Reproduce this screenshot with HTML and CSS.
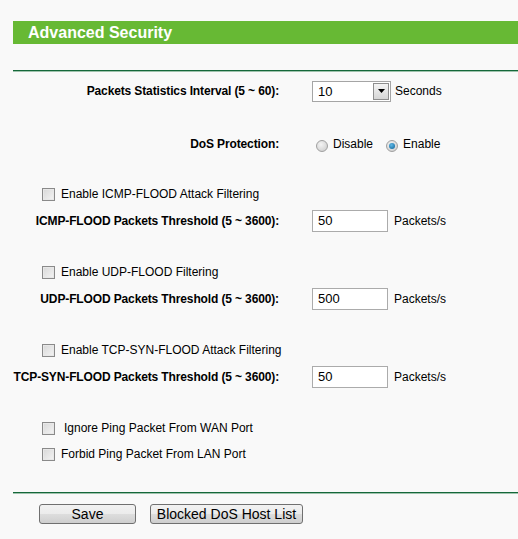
FILE: index.html
```html
<!DOCTYPE html>
<html>
<head>
<meta charset="utf-8">
<link rel="stylesheet" href="styles.css">
</head>
<body>
<div class="page">
  <div class="title">Advanced Security</div>
  <div class="rule top-rule"></div>

  <div class="row">
    <div class="label">Packets Statistics Interval (5 ~ 60):</div>
    <div class="value">
      <div class="select"><span class="sel-text">10</span><span class="sel-btn"><svg width="7" height="4" viewBox="0 0 7 4"><path d="M0 0h7L3.5 4z" fill="#000"/></svg></span></div>
      <span class="unit">Seconds</span>
    </div>
  </div>

  <div class="row gap-27">
    <div class="label">DoS Protection:</div>
    <div class="value radios">
      <span class="radio"></span><span class="rlabel">Disable</span>
      <span class="radio checked"></span><span class="rlabel">Enable</span>
    </div>
  </div>

  <div class="row check-row gap-24">
    <span class="checkbox"></span><span class="clabel">Enable ICMP-FLOOD Attack Filtering</span>
  </div>
  <div class="row gap-1">
    <div class="label">ICMP-FLOOD Packets Threshold (5 ~ 3600):</div>
    <div class="value"><div class="input">50</div><span class="unit u2">Packets/s</span></div>
  </div>

  <div class="row check-row gap-25">
    <span class="checkbox"></span><span class="clabel">Enable UDP-FLOOD Filtering</span>
  </div>
  <div class="row gap-1">
    <div class="label">UDP-FLOOD Packets Threshold (5 ~ 3600):</div>
    <div class="value"><div class="input">500</div><span class="unit u2">Packets/s</span></div>
  </div>

  <div class="row check-row gap-25">
    <span class="checkbox"></span><span class="clabel">Enable TCP-SYN-FLOOD Attack Filtering</span>
  </div>
  <div class="row gap-1">
    <div class="label">TCP-SYN-FLOOD Packets Threshold (5 ~ 3600):</div>
    <div class="value"><div class="input">50</div><span class="unit u2">Packets/s</span></div>
  </div>

  <div class="row check-row gap-25">
    <span class="checkbox"></span><span class="clabel extra">Ignore Ping Packet From WAN Port</span>
  </div>
  <div class="row check-row">
    <span class="checkbox"></span><span class="clabel">Forbid Ping Packet From LAN Port</span>
  </div>

  <div class="rule bottom-rule"></div>
  <div class="buttons">
    <button class="btn save">Save</button>
    <button class="btn blocked">Blocked DoS Host List</button>
  </div>
</div>
</body>
</html>
```

FILE: styles.css
```css
* { box-sizing: border-box; }
html, body {
  margin: 0;
  padding: 0;
  background: #f9f9f9;
}
body {
  font-family: "Liberation Sans", Arial, sans-serif;
  font-size: 12px;
  color: #000;
}
.page {
  width: 518px;
  height: 539px;
  padding-top: 21px;
  overflow: hidden;
}
.title {
  margin-left: 13px;
  height: 23px;
  background: #67b934;
  color: #fff;
  font-weight: bold;
  font-size: 16px;
  line-height: 23px;
  padding-left: 15px;
}
.rule {
  margin-left: 13px;
  height: 2px;
  border-top: 1px solid #15683a;
  border-bottom: 1px solid #9fc3ad;
}
.top-rule { margin-top: 26px; margin-bottom: 6px; }
.bottom-rule { margin-top: 25px; }
.row {
  height: 26px;
  display: flex;
  align-items: center;
}
.gap-27 { margin-top: 27px; }
.gap-24 { margin-top: 24px; }
.gap-25 { margin-top: 25px; }
.gap-1 { margin-top: 1px; }
.label {
  width: 280px;
  text-align: right;
  font-weight: bold;
  padding-right: 1px;
  white-space: nowrap;
  letter-spacing: -0.13px;
}
.value {
  margin-left: 32px;
  display: flex;
  align-items: center;
}
.select {
  width: 79px;
  height: 21px;
  border: 1px solid #a5a5a5;
  background: #fff;
  display: flex;
  align-items: center;
  justify-content: space-between;
  padding: 1px;
}
.sel-text {
  padding-left: 4px;
  font-size: 13px;
}
.sel-btn {
  width: 16px;
  height: 17px;
  border: 1px solid #8e8e8e;
  background: linear-gradient(#f4f4f4, #d6d6d6);
  display: flex;
  align-items: center;
  justify-content: center;
}
.unit { margin-left: 4px; }
.u2 { margin-left: 6px; }
.radios .radio:first-child { margin-left: 4px; }
.radio {
  width: 12px;
  height: 12px;
  border-radius: 50%;
  border: 1px solid #a0a0a0;
  background: radial-gradient(circle at 40% 35%, #f4f4f4, #c9c9c9);
  margin-top: 3px;
  display: inline-flex;
  align-items: center;
  justify-content: center;
}
.radio.checked::after {
  content: "";
  width: 6px;
  height: 6px;
  border-radius: 50%;
  background: radial-gradient(circle at 40% 35%, #5fb8e6, #0a5f95);
}
.rlabel { margin-left: 5px; }
.rlabel + .radio { margin-left: 13px; }
.check-row { padding-left: 42px; }
.checkbox {
  width: 13px;
  height: 13px;
  border: 1px solid #8a8a8a;
  background: linear-gradient(135deg, #d8d8d8, #f4f4f4);
  box-shadow: inset 0 0 0 1px #e8e8e8;
}
.clabel { margin-left: 6px; }
.clabel.extra { margin-left: 9px; }
.input {
  width: 76px;
  height: 22px;
  border: 1px solid #ababab;
  background: #fff;
  font-size: 13px;
  line-height: 20px;
  padding-left: 5px;
}
.buttons {
  display: flex;
  padding-left: 39px;
  margin-top: 10px;
  gap: 14px;
}
.btn {
  height: 20px;
  border: 1px solid #707070;
  border-radius: 3px;
  background: linear-gradient(#f2f2f2 0%, #ebebeb 50%, #dddddd 51%, #cfcfcf 100%);
  font-family: "Liberation Sans", Arial, sans-serif;
  font-size: 14px;
  color: #000;
  padding: 0;
  line-height: 18px;
}
.save { width: 97px; }
.blocked { width: 153px; }
```
